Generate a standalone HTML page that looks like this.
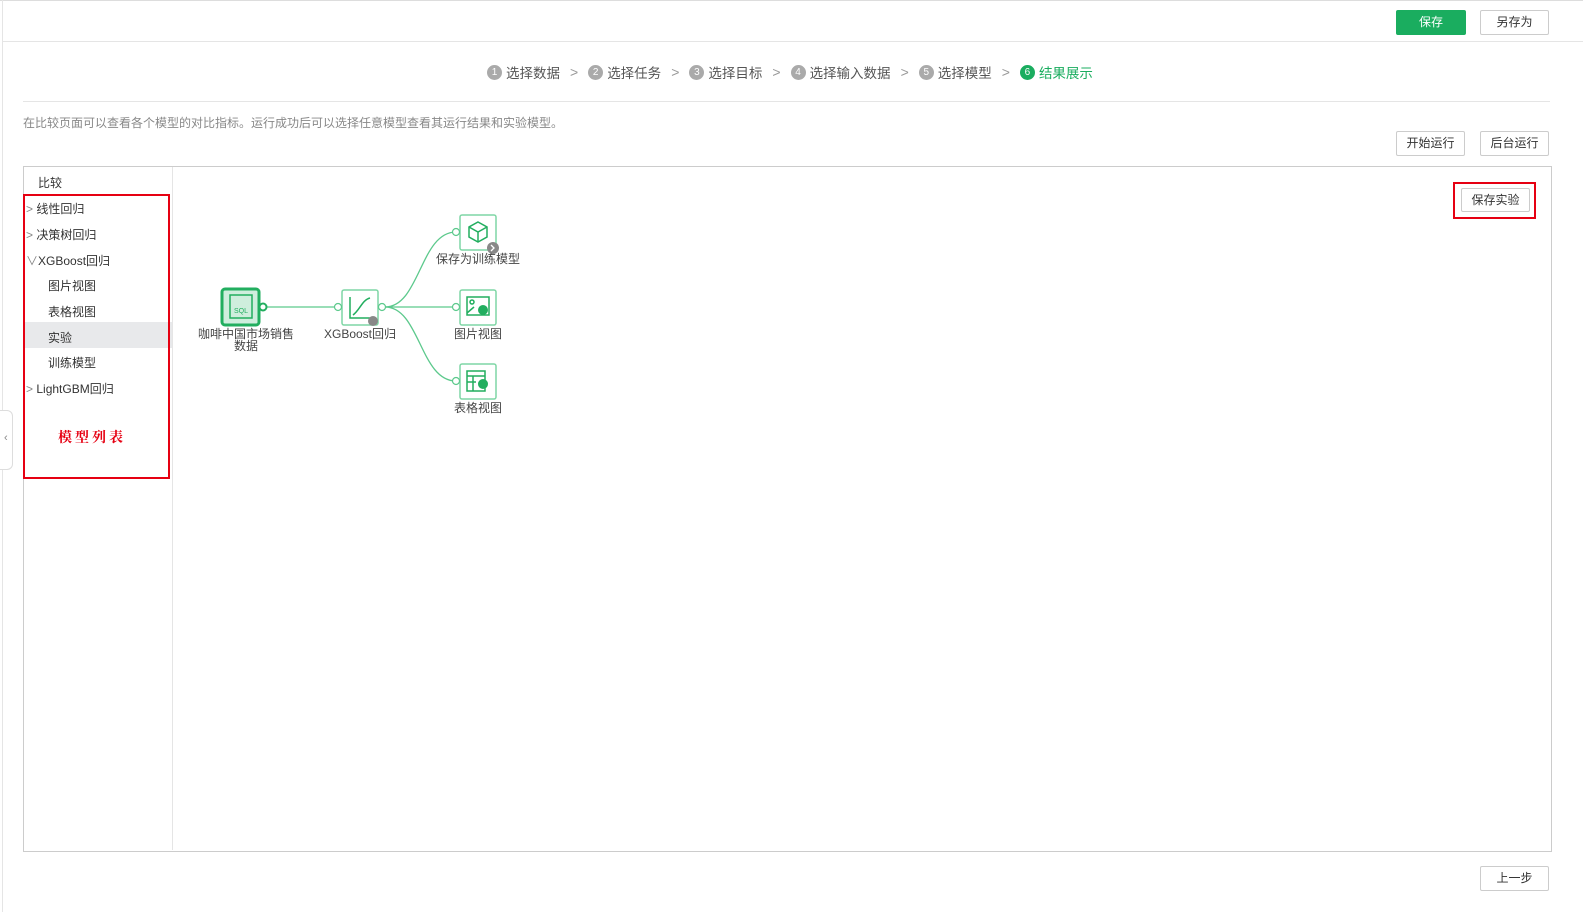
<!DOCTYPE html>
<html><head><meta charset="utf-8"><style>
body{margin:0;width:1583px;height:912px;background:#fff;font-family:"Liberation Sans","Noto Sans CJK SC",sans-serif;position:relative;overflow:hidden;color:#333}
.a{position:absolute}
.btn{position:absolute;border:1px solid #ccc;background:#fff;font-size:12px;color:#333;text-align:center;box-sizing:border-box;border-radius:2px}
.step{font-size:13.5px;color:#555;display:inline-flex;align-items:center}
.num{display:inline-block;width:15px;height:15px;border-radius:50%;background:#aaa;color:#fff;font-size:10px;line-height:15px;text-align:center;margin-right:4px}
.arr{color:#999;margin:0 10px;font-size:14px}
.it{position:absolute;font-size:12px;color:#333;left:38px}
</style></head><body>
<div class="a" style="left:0;top:0;width:1583px;height:1px;background:#ddd"></div>
<div class="a" style="left:2px;top:0;width:1px;height:912px;background:#e5e5e5"></div>
<div class="a" style="left:3px;top:41px;width:1580px;height:1px;background:#e5e5e5"></div>
<div class="btn" style="left:1396px;top:10px;width:70px;height:25px;line-height:23px;background:#1aad5f;border-color:#1aad5f;color:#fff">保存</div>
<div class="btn" style="left:1480px;top:10px;width:69px;height:25px;line-height:23px">另存为</div>
<div class="a" style="left:487px;top:62px;white-space:nowrap;display:flex;align-items:center">
<span class="step"><span class="num">1</span>选择数据</span><span class="arr">&gt;</span>
<span class="step"><span class="num">2</span>选择任务</span><span class="arr">&gt;</span>
<span class="step"><span class="num">3</span>选择目标</span><span class="arr">&gt;</span>
<span class="step"><span class="num">4</span>选择输入数据</span><span class="arr">&gt;</span>
<span class="step"><span class="num">5</span>选择模型</span><span class="arr">&gt;</span>
<span class="step" style="color:#1aad5f"><span class="num" style="background:#1aad5f">6</span>结果展示</span>
</div>
<div class="a" style="left:23px;top:101px;width:1527px;height:1px;background:#e5e5e5"></div>
<div class="a" style="left:23px;top:114px;font-size:12px;color:#888">在比较页面可以查看各个模型的对比指标。运行成功后可以选择任意模型查看其运行结果和实验模型。</div>
<div class="btn" style="left:1396px;top:131px;width:69px;height:25px;line-height:23px">开始运行</div>
<div class="btn" style="left:1480px;top:131px;width:69px;height:25px;line-height:23px">后台运行</div>
<div class="a" style="left:23px;top:166px;width:1527px;height:684px;border:1px solid #ccc"></div>
<div class="a" style="left:172px;top:167px;width:1px;height:683px;background:#e5e5e5"></div>
<div class="a" style="left:0;top:410px;width:12px;height:58px;border:1px solid #ddd;border-left:none;border-radius:0 6px 6px 0;background:#fff"></div>
<div class="a" style="left:4px;top:432px;font-size:11px;color:#888">&lsaquo;</div>
<div class="it" style="top:174px">比较</div>
<div class="a" style="left:24px;top:322px;width:148px;height:26px;background:#e8e9eb"></div>
<div class="it" style="top:200px;left:26px"><span style="color:#888">&gt;</span> 线性回归</div>
<div class="it" style="top:226px;left:26px"><span style="color:#888">&gt;</span> 决策树回归</div>
<div class="it" style="top:252px;left:26px"><span style="color:#888">∨</span>XGBoost回归</div>
<div class="it" style="top:277px;left:48px">图片视图</div>
<div class="it" style="top:303px;left:48px">表格视图</div>
<div class="it" style="top:329px;left:48px">实验</div>
<div class="it" style="top:354px;left:48px">训练模型</div>
<div class="it" style="top:380px;left:26px"><span style="color:#888">&gt;</span> LightGBM回归</div>
<div class="a" style="left:23px;top:194px;width:143px;height:281px;border:2px solid #e60012"></div>
<div class="a" style="left:58px;top:427px;font-size:14px;color:#e60012;font-family:'Noto Serif CJK SC',serif;letter-spacing:3px;font-weight:bold">模型列表</div>
<div class="a" style="left:1453px;top:182px;width:79px;height:33px;border:2px solid #e60012"></div>
<div class="btn" style="left:1461px;top:188px;width:69px;height:24px;line-height:22px">保存实验</div>
<svg class="a" style="left:0;top:0" width="1583" height="912">
<g fill="none" stroke="#5cc98c" stroke-width="1.3">
<path d="M265 307H338"/><path d="M385 307C420 307 420 232 456 232"/><path d="M385 307H456"/><path d="M385 307C420 307 420 381 456 381"/>
</g>
<rect x="222" y="289" width="37" height="36" rx="3" fill="#cfeedd" stroke="#22ae5f" stroke-width="3"/>
<rect x="230" y="295" width="22" height="23" fill="none" stroke="#22ae5f" stroke-width="1.5"/>
<text x="241" y="313" font-size="7" fill="#22ae5f" text-anchor="middle" font-family="Liberation Sans">SQL</text>
<circle cx="263" cy="307" r="3.5" fill="#fff" stroke="#22ae5f" stroke-width="2"/>
<g fill="#fff" stroke="#7fd6a5" stroke-width="1.5">
<rect x="342" y="290" width="36" height="35" rx="2"/>
<rect x="460" y="215" width="36" height="35" rx="2"/>
<rect x="460" y="290" width="36" height="35" rx="2"/>
<rect x="460" y="364" width="36" height="35" rx="2"/>
</g>
<g fill="#fff" stroke="#5cc98c" stroke-width="1.2">
<circle cx="338" cy="307" r="3.5"/><circle cx="382" cy="307" r="3.5"/>
<circle cx="456" cy="232" r="3.5"/><circle cx="456" cy="307" r="3.5"/><circle cx="456" cy="381" r="3.5"/>
</g>
<g fill="none" stroke="#22ae5f" stroke-width="1.5">
<path d="M350 297V318H371"/><path d="M353 315C360 310 362 300 370 298"/>
<path d="M478 222L487 227V237L478 242L469 237V227Z"/><path d="M469 227L478 232L487 227M478 232V242"/>
<rect x="467" y="297" width="22" height="18"/><circle cx="472" cy="302" r="2"/><path d="M467 313L474 307"/>
<rect x="467" y="371" width="18" height="20"/><path d="M467 376H485M467 382H476M473 376V391"/>
</g>
<circle cx="483" cy="310" r="5" fill="#22ae5f"/><circle cx="483" cy="384" r="5" fill="#22ae5f"/>
<circle cx="373" cy="321" r="5" fill="#888"/><circle cx="493" cy="248" r="6" fill="#888"/>
<path d="M491 245L494 248L491 251" stroke="#fff" fill="none" stroke-width="1.3"/>
<g font-size="12" fill="#444" text-anchor="middle" font-family="Liberation Sans,Noto Sans CJK SC,sans-serif">
<text x="246" y="338">咖啡中国市场销售</text><text x="246" y="350">数据</text>
<text x="360" y="338">XGBoost回归</text>
<text x="478" y="263">保存为训练模型</text>
<text x="478" y="338">图片视图</text>
<text x="478" y="412">表格视图</text>
</g>
</svg>
<div class="btn" style="left:1480px;top:866px;width:69px;height:25px;line-height:23px">上一步</div>
</body></html>
